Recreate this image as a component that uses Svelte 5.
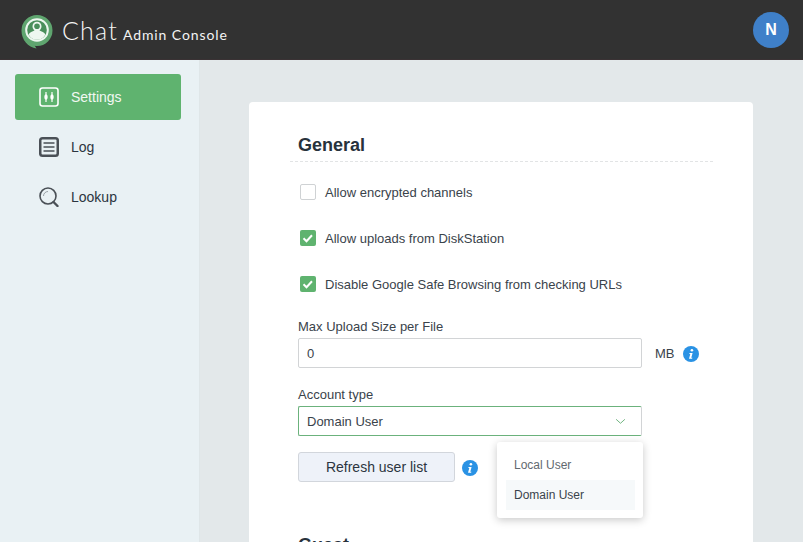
<script>
    let encrypted = $state(false);
    let uploads = $state(true);
    let safeBrowsing = $state(true);
    let maxSize = $state("0");

    const checks = [
        { label: "Allow encrypted channels", get: () => encrypted, set: (v) => (encrypted = v) },
        { label: "Allow uploads from DiskStation", get: () => uploads, set: (v) => (uploads = v) },
        { label: "Disable Google Safe Browsing from checking URLs", get: () => safeBrowsing, set: (v) => (safeBrowsing = v) },
    ];
</script>

{#snippet info()}
    <svg class="info" viewBox="0 0 16 16" width="16" height="16">
        <circle cx="8" cy="8" r="8" fill="#2a92e4" />
        <circle cx="8.9" cy="4.3" r="1.3" fill="#fff" />
        <path d="M6.6 7h3l-1.3 4.7h1.1l-.3 1H6l1.3-4.7H6.300z" fill="#fff" />
    </svg>
{/snippet}

<div class="shell">
    <header class="topbar">
        <svg class="logo" viewBox="0 0 32 36" width="32" height="36">
            <path d="M16 1a15.500 15.500 0 0 1 0 31c-.8 0-1.500 0-2.200-.2l1.700 2.700C7 33 .5 26 .5 16.500A15.500 15.500 0 0 1 16 1z" fill="#5fa56f" />
            <circle cx="16" cy="16" r="11.800" fill="#eef7f0" />
            <circle cx="16" cy="16" r="9.800" fill="#4a8f5b" />
            <path d="M7.600 20.500c1-2.600 3.900-3 5.900-4-1.300-1-2-2.500-2-4.200 0-2.600 1.900-4.500 4.500-4.500s4.500 1.900 4.500 4.500c0 1.700-.7 3.200-2 4.200 2 1 4.900 1.400 5.900 4A9.800 9.800 0 0 1 16 25.800a9.800 9.800 0 0 1-8.400-5.300z" fill="#eef7f0" />
            <circle cx="16" cy="12.300" r="2.800" fill="#4a8f5b" />
        </svg>
        <div class="brand">
            <span class="brand-main">Chat</span>
            <span class="brand-sub">Admin Console</span>
        </div>
        <div class="avatar">N</div>
    </header>

    <div class="body">
        <nav class="sidebar">
            <div class="nav-item active">
                <svg viewBox="0 0 20 20" width="20" height="20">
                    <rect x="1" y="1" width="18" height="18" rx="2.500" fill="none" stroke="#fff" stroke-width="1.600" />
                    <path d="M7 5v10M13 5v10" stroke="#fff" stroke-width="1.200" />
                    <ellipse cx="7" cy="10" rx="1.700" ry="2.700" fill="#fff" />
                    <ellipse cx="13" cy="10" rx="1.700" ry="2.700" fill="#fff" />
                </svg>
                <span>Settings</span>
            </div>
            <div class="nav-item">
                <svg viewBox="0 0 20 20" width="20" height="20">
                    <rect x="0" y="0" width="20" height="20" rx="3.500" fill="#4a5056" />
                    <rect x="2.500" y="2.500" width="15" height="15" rx="1" fill="#e9f1f4" />
                    <path d="M4.500 6h11M4.500 10h11M4.500 14h11" stroke="#4a5056" stroke-width="1.700" />
                </svg>
                <span>Log</span>
            </div>
            <div class="nav-item">
                <svg viewBox="0 0 20 20" width="20" height="20">
                    <circle cx="9" cy="9" r="8" fill="none" stroke="#4a5056" stroke-width="1.600" />
                    <path d="M4.500 9a4.500 4.500 0 0 1 4.500-4.500" fill="none" stroke="#9aa2a7" stroke-width="1" />
                    <path d="M14.500 15l4 4" stroke="#4a5056" stroke-width="2.400" stroke-linecap="round" />
                </svg>
                <span>Lookup</span>
            </div>
        </nav>

        <main class="content">
            <section class="card">
                <h2 class="section-title">General</h2>

                <div class="checks">
                    {#each checks as c}
                        <label class="check">
                            <input type="checkbox" checked={c.get()} onchange={(e) => c.set(e.currentTarget.checked)} />
                            <span class="box" class:on={c.get()}>
                                {#if c.get()}
                                    <svg viewBox="0 0 16 16" width="16" height="16">
                                        <path d="M3.500 8.300l3 2.900 5.500-6" fill="none" stroke="#fff" stroke-width="2" />
                                    </svg>
                                {/if}
                            </span>
                            {c.label}
                        </label>
                    {/each}
                </div>

                <div class="field first">
                    <div class="field-label">Max Upload Size per File</div>
                    <div class="row">
                        <input class="text-input" bind:value={maxSize} />
                        <span class="unit">MB</span>
                        {@render info()}
                    </div>
                </div>

                <div class="field account">
                    <div class="field-label">Account type</div>
                    <div class="select">
                        <span>Domain User</span>
                        <svg viewBox="0 0 12 8" width="11" height="7">
                            <path d="M1 1.500l5 4.500 5-4.500" fill="none" stroke="#6bb27c" stroke-width="1.100" />
                        </svg>
                    </div>
                    <div class="menu">
                        <div class="menu-item">Local User</div>
                        <div class="menu-item selected">Domain User</div>
                    </div>
                </div>

                <div class="refresh-row">
                    <button class="refresh">Refresh user list</button>
                    {@render info()}
                </div>

                <h2 class="section-title next">Guest</h2>
            </section>
        </main>
    </div>
</div>

<style>
    :global(body) {
        margin: 0;
        font-family: "Liberation Sans", Arial, sans-serif;
        overflow: hidden;
    }

    .shell {
        width: 803px;
        height: 542px;
        display: flex;
        flex-direction: column;
        overflow: hidden;
    }

    .topbar {
        height: 60px;
        flex: none;
        box-sizing: border-box;
        background: #323232;
        border-bottom: 1px solid #3a3234;
        display: flex;
        align-items: center;
        padding: 0 14px 0 21px;
    }

    .logo {
        margin-top: 4px;
    }

    .brand {
        margin-left: 9px;
        color: #f4f4f4;
        display: flex;
        align-items: baseline;
        font-family: Lato, sans-serif;
    }

    .brand-main {
        font-size: 25px;
        font-weight: 300;
        letter-spacing: 1.200px;
    }

    .brand-sub {
        font-size: 14px;
        letter-spacing: 0.900px;
        margin-left: 5px;
    }

    .avatar {
        margin-left: auto;
        width: 36px;
        height: 36px;
        border-radius: 50%;
        background: #3f80c9;
        color: #fff;
        font-size: 16px;
        font-weight: bold;
        display: flex;
        align-items: center;
        justify-content: center;
    }

    .body {
        flex: 1;
        display: flex;
        min-height: 0;
    }

    .sidebar {
        width: 200px;
        flex: none;
        box-sizing: border-box;
        background: #e9f1f4;
        border-right: 1px solid #dfe6e8;
        padding: 14px 18px 0 15px;
        display: flex;
        flex-direction: column;
        gap: 4px;
    }

    .nav-item {
        height: 46px;
        border-radius: 3px;
        display: flex;
        align-items: center;
        gap: 12px;
        padding-left: 24px;
        font-size: 14px;
        color: #2c3540;
    }

    .nav-item.active {
        background: #5fb36f;
        color: #f2f8f3;
    }

    .content {
        flex: 1;
        background: #e3e8ea;
        padding: 42px 50px 0 49px;
        min-width: 0;
    }

    .card {
        background: #fff;
        border-radius: 4px 4px 0 0;
        padding: 28px 40px 0 41px;
        height: 500px;
        box-sizing: border-box;
    }

    .section-title {
        margin: 0;
        padding: 2px 0 0 8px;
        height: 32px;
        box-sizing: border-box;
        font-size: 18px;
        line-height: 26px;
        font-weight: bold;
        color: #27323c;
        border-bottom: 1px dashed #e2e4e5;
    }

    .section-title.next {
        border: 0;
        margin-top: 48px;
    }

    .checks {
        display: flex;
        flex-direction: column;
        gap: 30px;
        margin-top: 22px;
        padding-left: 10px;
    }

    .check {
        display: flex;
        align-items: center;
        height: 16px;
        font-size: 13px;
        color: #3a434b;
    }

    .check input {
        display: none;
    }

    .box {
        width: 16px;
        height: 16px;
        box-sizing: border-box;
        border: 1px solid #cfd2d4;
        border-radius: 2px;
        margin-right: 9px;
        background: #fff;
    }

    .box.on {
        background: #5fb36f;
        border: 0;
    }

    .box svg {
        display: block;
    }

    .field {
        margin: 18px 0 0 8px;
    }

    .field.first {
        margin-top: 27px;
    }

    .field.account {
        position: relative;
        margin-top: 19px;
    }

    .field-label {
        font-size: 13px;
        line-height: 15px;
        color: #3a434b;
        margin-bottom: 4px;
    }

    .row {
        display: flex;
        align-items: center;
    }

    .text-input,
    .select {
        width: 344px;
        height: 30px;
        box-sizing: border-box;
        border: 1px solid #d2d4d6;
        border-radius: 2px;
        padding: 0 8px;
        font: 13px "Liberation Sans", Arial, sans-serif;
        color: #3a434b;
        background: #fff;
        outline: none;
    }

    .unit {
        font-size: 13px;
        color: #3a434b;
        margin: 0 8px 0 13px;
    }

    .select {
        display: flex;
        align-items: center;
        justify-content: space-between;
        padding-right: 15px;
        border-color: #6bb27c #d2d4d6 #6bb27c #6bb27c;
    }

    .menu {
        position: absolute;
        left: 199px;
        top: 55px;
        width: 146px;
        box-sizing: border-box;
        padding: 8px 8px 8px 9px;
        background: #fff;
        border-radius: 3px;
        box-shadow: 0 2px 8px rgba(0, 0, 0, 0.22);
    }

    .menu-item {
        height: 30px;
        line-height: 30px;
        padding-left: 8px;
        font-size: 12px;
        color: #62696f;
    }

    .menu-item.selected {
        background: #f6f9fa;
        color: #3a434b;
    }

    .refresh-row {
        display: flex;
        align-items: center;
        gap: 7px;
        margin: 16px 0 0 8px;
    }

    .refresh {
        width: 157px;
        height: 30px;
        box-sizing: border-box;
        border: 1px solid #d2d6dc;
        border-radius: 3px;
        background: #eef2f9;
        font: 14px "Liberation Sans", Arial, sans-serif;
        color: #2c3540;
        padding: 0;
    }

    .info {
        flex: none;
        margin-top: 2px;
    }
</style>
